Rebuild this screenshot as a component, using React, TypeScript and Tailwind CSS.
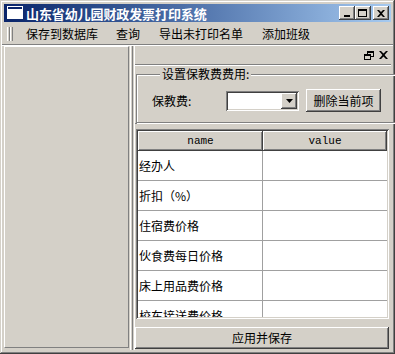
import React from "react";

const raised =
  "shadow-[inset_-1px_-1px_#404040,inset_1px_1px_#ffffff,inset_-2px_-2px_#808080,inset_2px_2px_#d4d0c8]";
const sunken =
  "shadow-[inset_1px_1px_#808080,inset_-1px_-1px_#ffffff,inset_2px_2px_#404040,inset_-2px_-2px_#d4d0c8]";

const rows = ["经办人", "折扣（%）", "住宿费价格", "伙食费每日价格", "床上用品费价格", "校车接送费价格"];

const TitleButton: React.FC<{ children: React.ReactNode; className?: string }> = ({ children, className }) => (
  <div className={`w-[16px] h-[14px] bg-[#d4d0c8] flex items-center justify-center ${raised} ${className ?? ""}`}>
    {children}
  </div>
);

const App: React.FC = () => {
  return (
    <div className="w-[395px] h-[354px] bg-[#d4d0c8] p-[4px] flex flex-col font-['Noto_Sans_CJK_SC',sans-serif] text-[12px] text-black shadow-[inset_-1px_-1px_#404040,inset_1px_1px_#d4d0c8,inset_-2px_-2px_#808080,inset_2px_2px_#ffffff] overflow-hidden">
      {/* title bar */}
      <div className="h-[18px] shrink-0 flex items-center bg-gradient-to-r from-[#0a246a] to-[#a6caf0] pl-[3px] pr-[2px]">
        <svg width="16" height="14" viewBox="0 0 16 14" className="shrink-0">
          <rect x="0.5" y="0.5" width="15" height="12" fill="#fff" stroke="#fff" />
          <rect x="1" y="1" width="14" height="2" fill="#0a246a" />
          <rect x="1" y="3" width="14" height="9" fill="#fff" />
        </svg>
        <span className="ml-[3px] text-white font-bold text-[13px] leading-none tracking-[-0.1px]">
          山东省幼儿园财政发票打印系统
        </span>
        <div className="ml-auto flex items-center">
          <TitleButton>
            <div className="w-[6px] h-[2px] bg-black mt-[6px] -ml-[1px]" />
          </TitleButton>
          <TitleButton>
            <div className="w-[9px] h-[8px] border border-black border-t-2 -ml-[1px]" />
          </TitleButton>
          <TitleButton className="ml-[2px]">
            <svg width="8" height="7" viewBox="0 0 8 7" className="-ml-[1px]">
              <path d="M0 0 L2 0 L4 2 L6 0 L8 0 L5 3.5 L8 7 L6 7 L4 5 L2 7 L0 7 L3 3.5 Z" fill="#000" />
            </svg>
          </TitleButton>
        </div>
      </div>

      {/* menu bar */}
      <div className="h-[21px] mt-[1px] shrink-0 flex items-center">
        <div className="flex ml-[3px] h-[14px]">
          <div className="w-[3px] border-l border-white border-r border-r-[#808080]" />
          <div className="w-[3px] border-l border-white border-r border-r-[#808080]" />
        </div>
        <div className="flex ml-[4px] leading-none">
          <span className="px-[9px]">保存到数据库</span>
          <span className="px-[9px]">查询</span>
          <span className="px-[10px]">导出未打印名单</span>
          <span className="px-[9px]">添加班级</span>
        </div>
      </div>
      <div className="h-[2px] shrink-0 border-t border-[#808080] border-b border-b-white -mx-[2px]" />

      {/* body */}
      <div className="flex-1 flex min-h-0">
        {/* left panel */}
        <div className="w-[125px] shrink-0 border-l border-t border-white border-r border-b border-r-[#808080] border-b-[#808080] mb-[2px]" />
        {/* splitter */}
        <div className="w-[5px] shrink-0 flex">
          <div className="ml-[1px] w-[1px] bg-white" />
          <div className="ml-[1px] w-[1px] bg-[#808080]" />
        </div>

        {/* right panel */}
        <div className="flex-1 flex flex-col border-l border-white min-w-0">
          <div className="h-[18px] shrink-0 flex items-center justify-end gap-[5px] pr-[3px]">
            <svg width="10" height="9" viewBox="0 0 10 9">
              <rect x="3" y="0" width="7" height="2" fill="#000" />
              <rect x="3" y="0" width="1" height="4" fill="#000" />
              <rect x="9" y="0" width="1" height="6" fill="#000" />
              <rect x="7" y="5" width="3" height="1" fill="#000" />
              <rect x="0" y="3" width="7" height="2" fill="#000" />
              <rect x="0" y="3" width="1" height="6" fill="#000" />
              <rect x="6" y="3" width="1" height="6" fill="#000" />
              <rect x="0" y="8" width="7" height="1" fill="#000" />
            </svg>
            <svg width="9" height="8" viewBox="0 0 9 8">
              <path d="M0 0 L2 0 L4.5 2.6 L7 0 L9 0 L5.6 4 L9 8 L7 8 L4.5 5.4 L2 8 L0 8 L3.4 4 Z" fill="#000" />
            </svg>
          </div>

          {/* group area */}
          <div className="h-[60px] shrink-0 border-t border-[#808080] shadow-[inset_0_1px_#ffffff] border-b border-b-[#808080] pt-[2px] px-[1px] pr-[2px]">
            <fieldset className="h-[56px] border border-[#808080] shadow-[inset_1px_1px_#ffffff,1px_1px_#ffffff] px-[15px]">
              <legend className="ml-[8px] px-[2px] bg-[#d4d0c8] leading-[14px]">设置保教费费用:</legend>
              <div className="flex items-center mt-[8px]">
                <span className="w-[74px] leading-none">保教费:</span>
                <div className={`w-[73px] h-[20px] bg-white flex justify-end p-[2px] ${sunken}`}>
                  <div className={`w-[16px] h-[16px] bg-[#d4d0c8] flex items-center justify-center ${raised}`}>
                    <svg width="7" height="4" viewBox="0 0 7 4">
                      <path d="M0 0 H7 L3.5 4 Z" fill="#000" />
                    </svg>
                  </div>
                </div>
                <button className={`ml-[7px] w-[75px] h-[23px] bg-[#d4d0c8] leading-none ${raised}`}>删除当前项</button>
              </div>
            </fieldset>
          </div>

          {/* property grid */}
          <div className={`mt-[5px] mx-[1px] mr-[2px] h-[190px] shrink-0 p-[2px] bg-[#d4d0c8] ${sunken} overflow-hidden`}>
            <div className="h-full bg-white overflow-hidden">
              <div className="flex h-[20px] font-['Liberation_Mono',monospace] text-[11px]">
                <div className={`w-[125px] bg-[#d4d0c8] flex items-center justify-center ${raised}`}>name</div>
                <div className={`flex-1 bg-[#d4d0c8] flex items-center justify-center ${raised}`}>value</div>
              </div>
              {rows.map((r) => (
                <div key={r} className="flex h-[30px] border-b border-[#a0a0a0]">
                  <div className="w-[125px] border-r border-[#a0a0a0] flex items-center pl-[1px] text-[12px]">{r}</div>
                  <div className="flex-1" />
                </div>
              ))}
            </div>
          </div>

          <button className={`mt-[8px] mr-[2px] h-[22px] shrink-0 bg-[#d4d0c8] leading-none ${raised}`}>应用并保存</button>
        </div>
      </div>
    </div>
  );
};

export default App;
